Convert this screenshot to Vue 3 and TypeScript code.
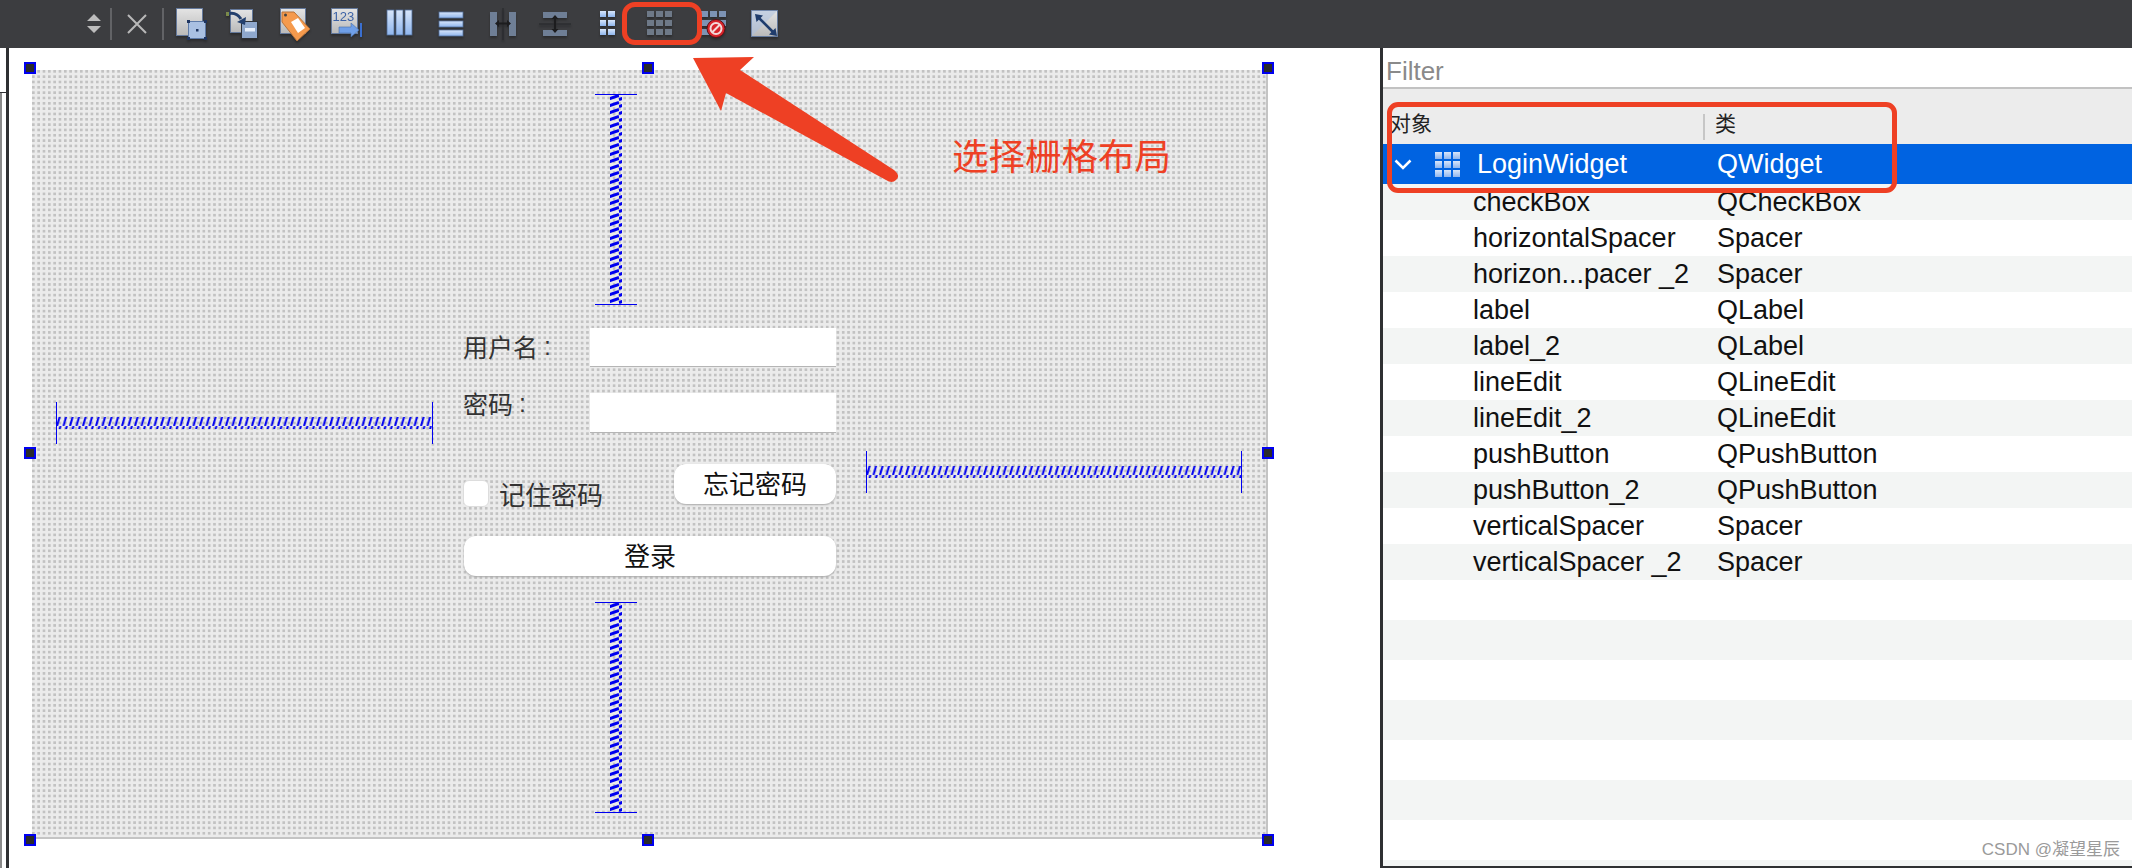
<script setup lang="ts">
interface TreeRow {
  name: string;
  type: string;
}

const rows: TreeRow[] = [
  { name: "checkBox", type: "QCheckBox" },
  { name: "horizontalSpacer", type: "Spacer" },
  { name: "horizon...pacer _2", type: "Spacer" },
  { name: "label", type: "QLabel" },
  { name: "label_2", type: "QLabel" },
  { name: "lineEdit", type: "QLineEdit" },
  { name: "lineEdit_2", type: "QLineEdit" },
  { name: "pushButton", type: "QPushButton" },
  { name: "pushButton_2", type: "QPushButton" },
  { name: "verticalSpacer", type: "Spacer" },
  { name: "verticalSpacer _2", type: "Spacer" },
];

const emptyRows = 8;
const gridCells = [0, 1, 2];
</script>

<template>
  <div class="page">
    <svg class="defs" width="0" height="0" aria-hidden="true">
      <defs>
        <linearGradient id="paper" x1="0" y1="0" x2="0" y2="1">
          <stop offset="0" stop-color="#e4e4e4" />
          <stop offset="1" stop-color="#b9b9b9" />
        </linearGradient>
        <linearGradient id="bar" x1="0" y1="0" x2="0" y2="1">
          <stop offset="0" stop-color="#d8e6fa" />
          <stop offset="1" stop-color="#8fb6ee" />
        </linearGradient>
        <pattern id="hcoil" width="6.500" height="12" patternUnits="userSpaceOnUse">
          <path d="M1 12 L4.500 0" stroke="#0000f0" stroke-width="2" fill="none" />
        </pattern>
        <pattern id="vcoil" width="12" height="7" patternUnits="userSpaceOnUse">
          <path d="M0 5.500 L12 1.500" stroke="#0000f0" stroke-width="3" fill="none" />
        </pattern>
      </defs>
    </svg>

    <header class="toolbar">
      <svg class="updown" width="14" height="19" viewBox="0 0 14 19">
        <path d="M7 0 L14 7 H0 Z M0 12 H14 L7 19 Z" fill="#bdbdbd" />
      </svg>
      <span class="sep sep-a"></span>
      <svg class="close" width="20" height="20" viewBox="0 0 20 20">
        <path d="M1 1 L19 19 M19 1 L1 19" stroke="#b9b9b9" stroke-width="2" fill="none" />
      </svg>
      <span class="sep sep-b"></span>

      <div class="tools">
        <!-- add widget -->
        <svg class="tool" viewBox="0 0 36 36">
          <rect x="3.500" y="2.500" width="26" height="27" fill="url(#paper)" stroke="#64799c" />
          <rect x="15.500" y="15.500" width="17" height="17" fill="#a9c0e2" stroke="#5d7aa8" />
          <path d="M14 14h3v3h-3z M31 14h3v3h-3z M14 31h3v3h-3z M31 31h3v3h-3z M23 23h2.500v2.500h-2.500z" fill="#1f3560" />
        </svg>
        <!-- buddies -->
        <svg class="tool" viewBox="0 0 36 36">
          <rect x="5.500" y="3.500" width="22" height="23" fill="url(#paper)" stroke="#64799c" />
          <rect x="16.500" y="15.500" width="16" height="17" fill="#8fa8cd" stroke="#2f3237" />
          <rect x="20" y="22" width="10" height="3.500" fill="#e6eefa" />
          <path d="M2 8 Q11 5 16 13" stroke="#24406e" stroke-width="3" fill="none" />
          <path d="M12 16 L21 11 L20 19 Z" fill="#24406e" />
          <rect x="1" y="6" width="3" height="4" fill="#7a8a4a" />
        </svg>
        <!-- tab order tag -->
        <svg class="tool" viewBox="0 0 36 36">
          <rect x="3.500" y="2.500" width="25" height="25" fill="url(#paper)" stroke="#64799c" />
          <path d="M5 6 L17 6 L33 23 L20 35 L5 16 Z" fill="#f59a4d" stroke="#b8733a" />
          <path d="M14 16 L21 12 L28 22 L21 27 Z" fill="#ffffff" />
          <circle cx="8.500" cy="9" r="1.500" fill="#444" />
        </svg>
        <!-- tab stops -->
        <svg class="tool" viewBox="0 0 36 36">
          <rect x="2.500" y="2.500" width="26" height="25" fill="url(#paper)" stroke="#64799c" />
          <text x="3.500" y="15" class="tool-num">123</text>
          <path d="M10 21 H22 V17 L30 24 L22 31 V27 H10 Z" fill="#6f9fe8" stroke="#476fa8" stroke-width="0.600" />
          <rect x="31" y="17" width="2" height="14" fill="#3a6fd0" />
        </svg>
        <!-- columns -->
        <svg class="tool" viewBox="0 0 36 36">
          <g fill="url(#bar)" stroke="#54719e" stroke-width="0.800">
            <rect x="6" y="4" width="7" height="25" />
            <rect x="15" y="4" width="7" height="25" />
            <rect x="24" y="4" width="7" height="25" />
          </g>
        </svg>
        <!-- rows -->
        <svg class="tool" viewBox="0 0 36 36">
          <g fill="url(#bar)" stroke="#54719e" stroke-width="0.800">
            <rect x="6" y="6" width="24" height="6" />
            <rect x="6" y="15" width="24" height="6" />
            <rect x="6" y="24" width="24" height="6" />
          </g>
        </svg>
        <!-- horizontal splitter -->
        <svg class="tool" viewBox="0 0 36 36">
          <rect x="5" y="6" width="7" height="24" fill="#6f7f96" />
          <rect x="24" y="6" width="7" height="24" fill="#6f7f96" />
          <path d="M18 2 V34" stroke="#2d2e31" stroke-width="1.500" />
          <path d="M10 17.500 L14 14 V16.500 H22 V14 L26 17.500 L22 21 V18.500 H14 V21 Z" fill="#1c1c1e" />
        </svg>
        <!-- vertical splitter -->
        <svg class="tool" viewBox="0 0 36 36">
          <rect x="6" y="6" width="24" height="6" fill="#6f7f96" />
          <rect x="6" y="24" width="24" height="6" fill="#6f7f96" />
          <path d="M2 18 H34" stroke="#2d2e31" stroke-width="1.500" />
          <path d="M18 9 L21.500 13 H19 V23 H21.500 L18 27 L14.500 23 H17 V13 H14.500 Z" fill="#1c1c1e" />
        </svg>
        <!-- form layout -->
        <svg class="tool" viewBox="0 0 36 36">
          <g fill="url(#bar)">
            <template v-for="r in gridCells" :key="r">
              <rect x="11" :y="5 + r * 9" width="6" height="6" />
              <rect x="19" :y="5 + r * 9" width="7" height="6" />
            </template>
          </g>
        </svg>
        <!-- grid layout, disabled -->
        <svg class="tool" viewBox="0 0 36 36">
          <g fill="#6e7988">
            <template v-for="r in gridCells" :key="r">
              <rect
                v-for="c in gridCells"
                :key="c"
                :x="6 + c * 9"
                :y="5 + r * 9"
                width="7"
                height="6"
              />
            </template>
          </g>
        </svg>
        <!-- break layout -->
        <svg class="tool break" viewBox="0 0 36 36">
          <g fill="#7d93b4">
            <rect x="6" y="5" width="7" height="6" />
            <rect x="15" y="5" width="7" height="6" />
            <rect x="24" y="5" width="7" height="6" />
            <rect x="6" y="14" width="25" height="6" />
            <rect x="6" y="23" width="10" height="6" />
          </g>
          <circle cx="21" cy="22.500" r="9" fill="#d8232a" stroke="#5a1216" />
          <circle cx="21" cy="22.500" r="5.500" fill="none" stroke="#f4d9d9" stroke-width="2" />
          <path d="M17 26.500 L25 18.500" stroke="#f4d9d9" stroke-width="2" />
        </svg>
        <!-- adjust size -->
        <svg class="tool adjust" viewBox="0 0 36 36">
          <rect x="4.500" y="4.500" width="26" height="26" fill="url(#paper)" stroke="#64799c" />
          <path d="M4.500 4.500 H30.500 L4.500 30.500 Z" fill="#a9c0e2" opacity="0.500" />
          <path d="M11 11 L27 27" stroke="#1f3c6c" stroke-width="2.500" />
          <path d="M8 8 L16 9.500 L9.500 16 Z M30 30 L22 28.500 L28.500 22 Z" fill="#1f3c6c" />
        </svg>
      </div>
    </header>

    <div class="body">
      <aside class="edge">
        <div class="edge-top"></div>
        <div class="edge-bottom"></div>
      </aside>

      <main class="designer">
        <div class="canvas">
          <i class="handle tl"></i>
          <i class="handle tc"></i>
          <i class="handle tr"></i>
          <i class="handle ml"></i>
          <i class="handle mr"></i>
          <i class="handle bl"></i>
          <i class="handle bc"></i>
          <i class="handle br"></i>

          <svg class="vspacer top" width="42" height="211" viewBox="0 0 42 211">
            <rect x="15" y="1" width="12" height="209" fill="url(#vcoil)" />
            <path d="M0 0.500 H42 M0 210.500 H42" stroke="#0000f0" stroke-width="1" />
          </svg>

          <svg class="hspacer left" width="377" height="42" viewBox="0 0 377 42">
            <rect x="1" y="15" width="375" height="12" fill="url(#hcoil)" />
            <path d="M0.500 0 V42 M376.500 0 V42" stroke="#0000f0" stroke-width="1" />
          </svg>

          <form class="login" @submit.prevent>
            <div class="field">
              <label class="label">用户名<span class="colon">:</span></label>
              <input class="input" type="text" />
            </div>
            <div class="field second">
              <label class="label">密码<span class="colon">:</span></label>
              <input class="input" type="password" />
            </div>
            <div class="options">
              <label class="remember"><span class="check"></span>记住密码</label>
              <button class="btn forgot" type="button">忘记密码</button>
            </div>
            <button class="btn submit" type="submit">登录</button>
          </form>

          <svg class="hspacer right" width="376" height="42" viewBox="0 0 376 42">
            <rect x="1" y="15" width="374" height="12" fill="url(#hcoil)" />
            <path d="M0.500 0 V42 M375.500 0 V42" stroke="#0000f0" stroke-width="1" />
          </svg>

          <svg class="vspacer bottom" width="42" height="211" viewBox="0 0 42 211">
            <rect x="15" y="1" width="12" height="209" fill="url(#vcoil)" />
            <path d="M0 0.500 H42 M0 210.500 H42" stroke="#0000f0" stroke-width="1" />
          </svg>
        </div>
      </main>

      <section class="inspector">
        <div class="filter">Filter</div>
        <div class="tree-head">
          <span class="col-object">对象</span>
          <span class="col-class">类</span>
        </div>
        <div class="tree-root">
          <svg class="chevron" width="18" height="11" viewBox="0 0 18 11">
            <path d="M1.500 1.500 L9 9 L16.500 1.500" stroke="#ffffff" stroke-width="2.500" fill="none" />
          </svg>
          <svg class="root-icon" width="25" height="25" viewBox="0 0 25 25">
            <g fill="url(#bar)">
              <template v-for="r in gridCells" :key="r">
                <rect v-for="c in gridCells" :key="c" :x="c * 9" :y="r * 9" width="7" height="7" />
              </template>
            </g>
          </svg>
          <span class="root-name">LoginWidget</span>
          <span class="root-type">QWidget</span>
        </div>
        <div class="tree-rows">
          <div v-for="row in rows" :key="row.name" class="tree-row">
            <span>{{ row.name }}</span>
            <span>{{ row.type }}</span>
          </div>
          <div v-for="n in emptyRows" :key="n" class="tree-empty"></div>
        </div>
        <span class="watermark">CSDN @凝望星辰</span>
      </section>
    </div>

    <!-- annotations drawn over the screenshot -->
    <div class="mark mark-tool"></div>
    <div class="mark mark-head"></div>
    <svg class="arrow" width="230" height="140" viewBox="0 0 230 140">
      <path
        d="M3 8 L64 7 L50 20 L204 120 Q211 126 206 130 Q202 134 196 130 L36 43 L31 61 Z"
        fill="#ee4024"
      />
    </svg>
    <span class="note">选择栅格布局</span>
  </div>
</template>

<style scoped>
.page {
  position: relative;
  width: 2132px;
  height: 868px;
  overflow: hidden;
  display: flex;
  flex-direction: column;
  background: #ffffff;
  font-family: "Liberation Sans", "Noto Sans CJK SC", sans-serif;
}

.defs {
  position: absolute;
}

.toolbar {
  height: 48px;
  flex: none;
  display: flex;
  align-items: center;
  padding-left: 87px;
  background: #3c3d40;
}

.updown {
  margin-top: -1px;
}

.sep {
  width: 2px;
  height: 32px;
  background: #626366;
}

.sep-a {
  margin-left: 9px;
}

.close {
  margin-left: 15px;
}

.sep-b {
  margin-left: 15px;
}

.tools {
  display: flex;
  margin-left: 1px;
}

.tool {
  width: 36px;
  height: 36px;
  margin: 0 8px;
  filter: drop-shadow(0 2px 1px #2b2c2e);
}

.tool.break {
  transform: translateX(2px);
}

.tool.adjust {
  transform: translateX(2px);
}

.tool-num {
  font-family: "Liberation Sans", sans-serif;
  font-size: 13px;
  fill: #3c62a6;
}

.body {
  flex: 1;
  min-height: 0;
  display: flex;
}

.edge {
  width: 6px;
  flex: none;
  display: flex;
  flex-direction: column;
  border-right: 3px solid #2f3032;
  box-sizing: content-box;
}

.edge-top {
  height: 44px;
  border-bottom: 1px solid #2f3032;
}

.edge-bottom {
  flex: 1;
  border-left: 2px solid #8a8a8a;
}

.designer {
  flex: 1;
  min-width: 0;
  padding: 22px 0 0 23px;
}

.canvas {
  position: relative;
  box-sizing: border-box;
  width: 1236px;
  height: 769px;
  padding: 24px 0 0 24px;
  display: grid;
  grid-template-columns: 377px 373px 376px;
  grid-template-rows: 210px 250px 211px;
  column-gap: 30px;
  row-gap: 24px;
  border-right: 2px solid #c4c4c4;
  border-bottom: 2px solid #c4c4c4;
  background-color: #ebebeb;
  background-image: conic-gradient(from 270deg at 2.700px 2.700px, #c2c2c2 25%, transparent 0);
  background-size: 5.330px 5.330px;
}

.handle {
  position: absolute;
  box-sizing: border-box;
  width: 12px;
  height: 12px;
  border: 2px solid #0000f0;
  background: #2a2a2a;
}

.tl {
  left: -8px;
  top: -8px;
}

.tc {
  left: 610px;
  top: -8px;
}

.tr {
  left: 1230px;
  top: -8px;
}

.ml {
  left: -8px;
  top: 377px;
}

.mr {
  left: 1230px;
  top: 377px;
}

.bl {
  left: -8px;
  top: 764px;
}

.bc {
  left: 610px;
  top: 764px;
}

.br {
  left: 1230px;
  top: 764px;
}

.vspacer {
  grid-column: 2;
  justify-self: start;
  margin-left: 132px;
}

.vspacer.top {
  grid-row: 1;
}

.vspacer.bottom {
  grid-row: 3;
}

.hspacer {
  grid-row: 2;
}

.hspacer.left {
  grid-column: 1;
  margin-top: 74px;
}

.hspacer.right {
  grid-column: 3;
  margin-top: 123px;
}

.login {
  grid-column: 2;
  grid-row: 2;
  display: flex;
  flex-direction: column;
}

.field {
  display: flex;
  align-items: flex-start;
  height: 39px;
}

.field.second {
  height: 40px;
  margin-top: 26px;
}

.label {
  width: 127px;
  flex: none;
  margin-top: -1px;
  font-size: 25px;
  line-height: 39px;
  color: #333333;
}

.field.second .label {
  margin-top: -9px;
}

.colon {
  margin-left: 6px;
  vertical-align: 2px;
}

.input {
  flex: 1;
  min-width: 0;
  height: 100%;
  box-sizing: border-box;
  padding: 0;
  border: 0;
  border-bottom: 1px solid #b5b5b5;
  background: #ffffff;
  outline: none;
}

.options {
  display: flex;
  justify-content: space-between;
  margin-top: 31px;
  height: 43px;
}

.remember {
  display: flex;
  align-items: center;
  margin-top: 16px;
  height: 27px;
  font-size: 26px;
  color: #333333;
}

.check {
  width: 26px;
  height: 27px;
  margin-right: 10px;
  box-sizing: border-box;
  border-radius: 6px;
  border: 1px solid #dddddd;
  background: #ffffff;
}

.btn {
  padding: 0 0 8px;
  border: 0;
  border-radius: 12px;
  background: #ffffff;
  box-shadow: 0 1px 2px #a8a8a8;
  font-family: inherit;
  font-size: 26px;
  color: #111111;
}

.forgot {
  width: 162px;
  height: 40px;
}

.submit {
  align-self: flex-end;
  width: 372px;
  height: 40px;
  margin-top: 29px;
}

.inspector {
  position: relative;
  flex: none;
  width: 752px;
  box-sizing: border-box;
  display: flex;
  flex-direction: column;
  overflow: hidden;
  border-left: 3px solid #2f3032;
  border-bottom: 2px solid #2f3032;
  font-size: 27px;
  color: #111111;
}

.filter {
  flex: none;
  height: 41px;
  box-sizing: border-box;
  padding: 4px 0 0 3px;
  border-bottom: 2px solid #c2c2c2;
  font-size: 26px;
  line-height: 38px;
  color: #8a8a8a;
}

.tree-head {
  flex: none;
  height: 55px;
  box-sizing: border-box;
  padding-top: 22px;
  display: flex;
  background: #ececec;
  font-size: 21px;
  line-height: 25px;
  color: #222222;
}

.col-object {
  width: 322px;
  height: 26px;
  margin-top: 3px;
  padding-left: 7px;
  line-height: 20px;
  box-sizing: border-box;
  border-right: 2px solid #c6c6c6;
}

.col-class {
  padding-left: 10px;
}

.tree-root {
  flex: none;
  height: 40px;
  display: flex;
  align-items: center;
  background: #0063e1;
  color: #ffffff;
}

.chevron {
  margin-left: 11px;
}

.root-icon {
  margin-left: 23px;
}

.root-name {
  width: 240px;
  margin-left: 17px;
}

.tree-rows {
  flex: 1;
  min-height: 0;
}

.tree-row {
  height: 36px;
  display: flex;
  align-items: center;
  padding-left: 90px;
  line-height: 36px;
}

.tree-row > span:first-child {
  width: 244px;
  flex: none;
}

.tree-row:nth-child(odd) {
  background: #f3f5f4;
}

.tree-empty {
  height: 40px;
}

.tree-empty:nth-child(odd) {
  background: #f3f5f4;
}

.watermark {
  position: absolute;
  right: 12px;
  bottom: 6px;
  font-size: 17px;
  line-height: 20px;
  color: #9a9a9a;
}

.mark {
  position: absolute;
  box-sizing: border-box;
  border: 5px solid #ee4024;
}

.mark-tool {
  left: 622px;
  top: 2px;
  width: 80px;
  height: 43px;
  border-radius: 13px;
}

.mark-head {
  left: 1387px;
  top: 102px;
  width: 510px;
  height: 91px;
  border-radius: 11px;
}

.arrow {
  position: absolute;
  left: 690px;
  top: 50px;
}

.note {
  position: absolute;
  left: 952px;
  top: 137px;
  font-size: 36.500px;
  line-height: 42px;
  color: #ee4024;
}
</style>
